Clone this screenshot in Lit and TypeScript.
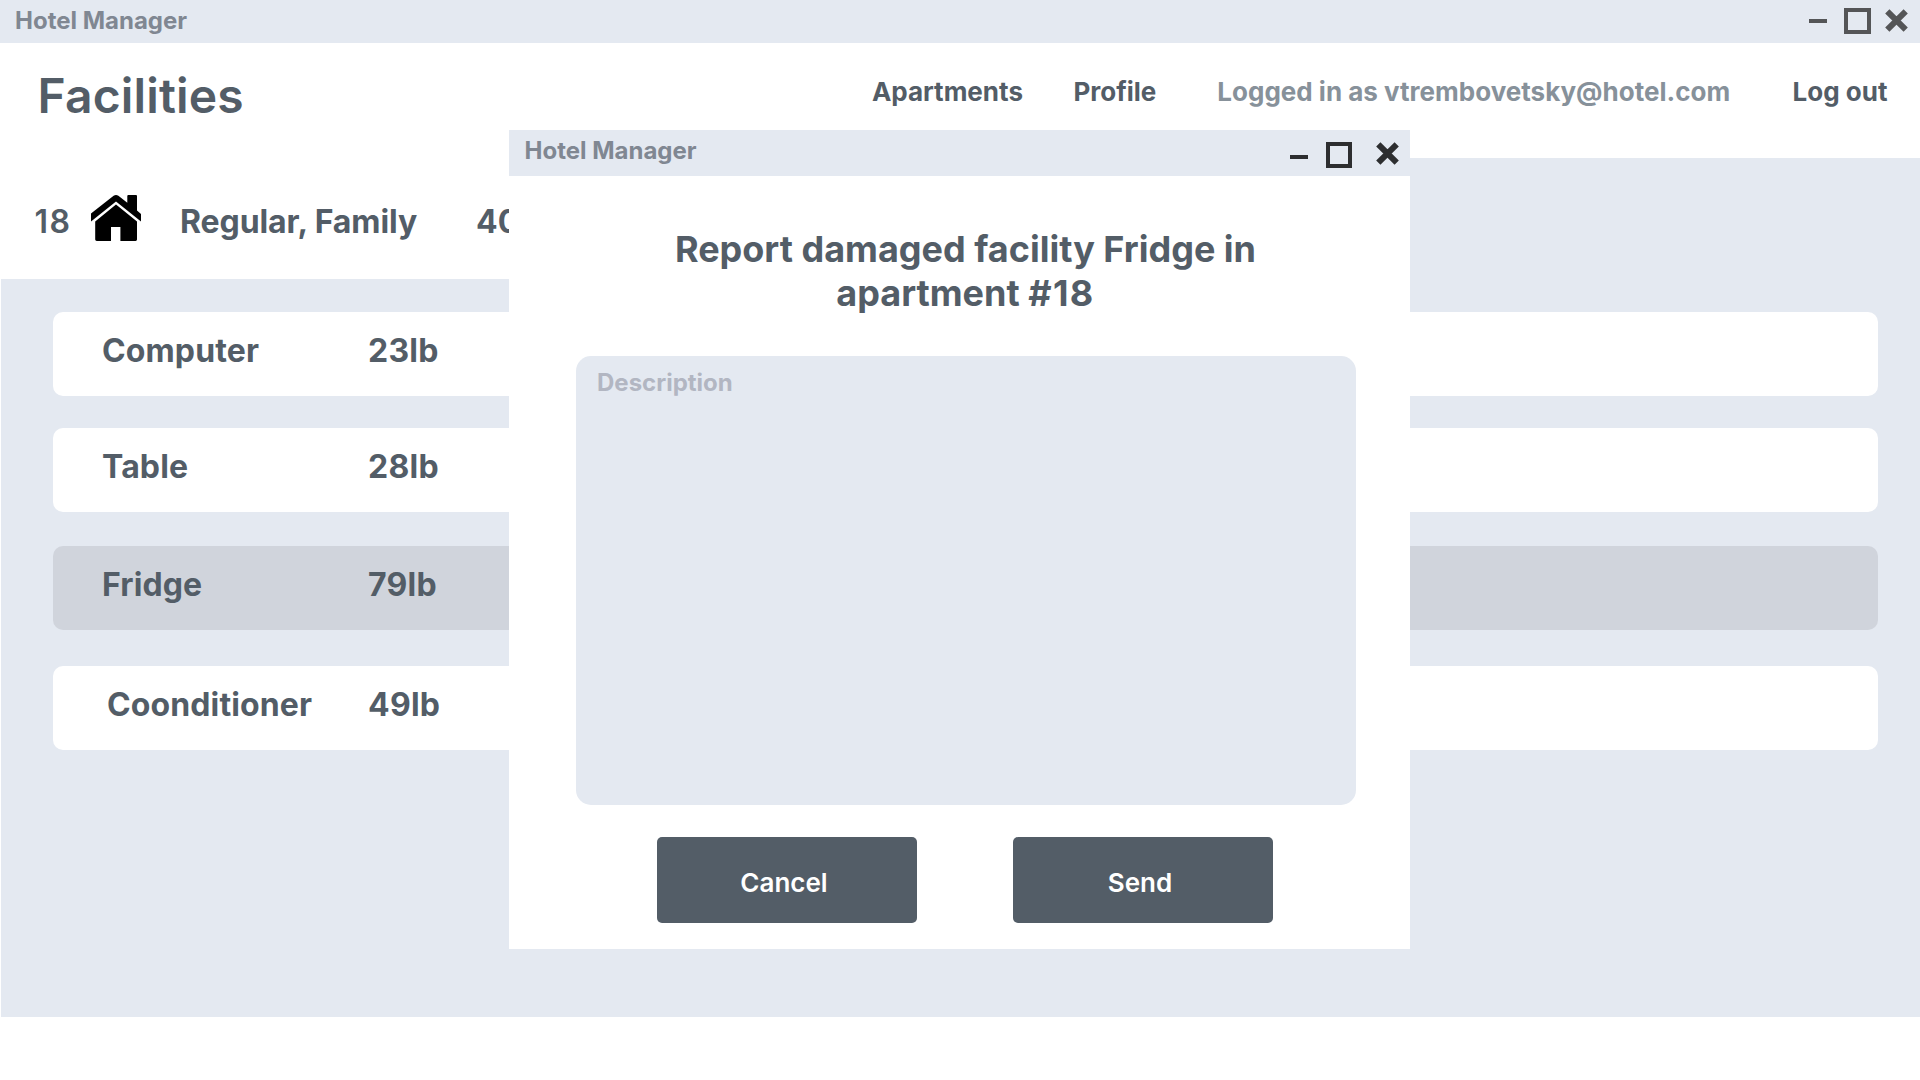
import { LitElement, html, svg, css } from "lit";
import { customElement, property } from "lit/decorators.js";
import { classMap } from "lit/directives/class-map.js";

interface Facility {
  name: string;
  price: string;
  selected?: boolean;
  indent?: boolean;
}

const facilities: Facility[] = [
  { name: "Computer", price: "23lb" },
  { name: "Table", price: "28lb" },
  { name: "Fridge", price: "79lb", selected: true },
  { name: "Coonditioner", price: "49lb", indent: true },
];

const crossPath = svg`<path d="M2.3 2.3L20.7 20.7M20.7 2.3L2.3 20.7" stroke="currentColor" stroke-width="6" fill="none" />`;

@customElement("window-bar")
export class WindowBar extends LitElement {
  @property({ type: Boolean, reflect: true }) dialog = false;

  static styles = css`
    :host {
      display: flex;
      box-sizing: border-box;
      height: 43px;
      padding: 6px 12.5px 0 15px;
      justify-content: space-between;
      background: #e4e9f1;
      color: #545557;
    }
    :host([dialog]) {
      height: 46px;
      padding: 6px 11px 0 15.5px;
      color: #2d2e30;
    }
    .label {
      font-size: 24px;
      line-height: 29px;
      font-weight: 700;
      color: #808792;
    }
    .controls {
      display: flex;
      align-items: flex-start;
    }
    .min {
      width: 18px;
      height: 4px;
      margin: 13px 17px 0 0;
      background: currentColor;
    }
    .max {
      box-sizing: border-box;
      width: 27px;
      height: 26px;
      margin: 2px 14px 0 0;
      border: 4px solid currentColor;
    }
    .close {
      display: block;
      width: 23px;
      height: 23px;
      margin-top: 3px;
    }
    :host([dialog]) .min {
      margin: 19px 18px 0 0;
    }
    :host([dialog]) .max {
      width: 26px;
      margin: 6px 24px 0 0;
    }
    :host([dialog]) .close {
      margin-top: 6px;
    }
  `;

  render() {
    return html`
      <span class="label">Hotel Manager</span>
      <div class="controls">
        <div class="min"></div>
        <div class="max"></div>
        <svg class="close" viewBox="0 0 23 23">${crossPath}</svg>
      </div>
    `;
  }
}

@customElement("report-dialog")
export class ReportDialog extends LitElement {
  static styles = css`
    :host {
      display: flex;
      flex-direction: column;
      background: #fff;
      color: #535d67;
    }
    .title {
      margin: 51px 0 0 12px;
      text-align: center;
      font-size: 36px;
      line-height: 44px;
      font-weight: 700;
    }
    .number {
      letter-spacing: 1.4px;
    }
    .field {
      box-sizing: border-box;
      height: 449px;
      margin: 41px 54px 0 67px;
      padding: 12px 21px;
      border-radius: 15px;
      background: #e4e9f1;
      color: #b2b6c2;
      font-size: 24px;
      line-height: 29px;
      font-weight: 700;
    }
    .actions {
      display: flex;
      gap: 96px;
      margin: 32px 0 0 148px;
    }
    .button {
      box-sizing: border-box;
      width: 260px;
      height: 86px;
      padding-top: 30px;
      padding-right: 6px;
      border-radius: 5px;
      background: #535d67;
      color: #fff;
      text-align: center;
      font-size: 26px;
      line-height: 31px;
      font-weight: 600;
    }
  `;

  render() {
    return html`
      <window-bar dialog></window-bar>
      <div class="title">
        Report damaged facility Fridge in<br />apartment <span class="number">#18</span>
      </div>
      <div class="field">Description</div>
      <div class="actions">
        <div class="button">Cancel</div>
        <div class="button">Send</div>
      </div>
    `;
  }
}

@customElement("app-root")
export class AppRoot extends LitElement {
  static styles = css`
    :host {
      display: block;
      position: relative;
      width: 1920px;
      height: 1080px;
      overflow: hidden;
      background: #fff;
      color: #535d67;
      font-family: Inter, sans-serif;
    }
    .header {
      display: flex;
      box-sizing: border-box;
      height: 115px;
      padding: 0 32.5px 0 37.5px;
      justify-content: space-between;
      align-items: flex-start;
    }
    .heading {
      margin-top: 24px;
      font-size: 48px;
      line-height: 58px;
      font-weight: 600;
      letter-spacing: 0.15px;
    }
    .nav {
      display: flex;
      margin-top: 33px;
      font-size: 26px;
      line-height: 31px;
      font-weight: 700;
      white-space: nowrap;
    }
    .profile {
      margin-left: 50.5px;
    }
    .user {
      margin-left: 61px;
      color: #87919a;
    }
    .logout {
      margin-left: 62.5px;
    }
    .panel {
      height: 859px;
      margin-left: 1px;
      background: #e4e9f1;
    }
    .apartment {
      display: flex;
      box-sizing: border-box;
      width: 1300px;
      height: 121px;
      margin-left: -1px;
      padding: 44px 0 0 34.5px;
      background: #fff;
      font-size: 32px;
      line-height: 39px;
      font-weight: 700;
      white-space: nowrap;
    }
    .number {
      width: 56.5px;
      font-weight: 600;
      letter-spacing: 1.5px;
    }
    .house {
      width: 50px;
      height: 46px;
      margin-top: -7px;
    }
    .kind {
      width: 296px;
      margin-left: 39px;
      letter-spacing: -0.08px;
    }
    .list {
      padding: 33px 42px 0 52px;
    }
    .card {
      display: flex;
      box-sizing: border-box;
      height: 84px;
      margin-bottom: 32px;
      padding: 19px 0 0 49px;
      border-radius: 10px;
      background: #fff;
      font-size: 32px;
      line-height: 39px;
      font-weight: 700;
      letter-spacing: 0.12px;
    }
    .card.selected {
      margin: 34px 0 36px;
      background: #d0d4dc;
    }
    .name {
      box-sizing: border-box;
      width: 266px;
    }
    .name.indent {
      padding-left: 5px;
    }
    .price {
      letter-spacing: 0.25px;
    }
    .dialog {
      position: absolute;
      left: 509px;
      top: 130px;
      width: 901px;
      height: 819px;
    }
  `;

  render() {
    return html`
      <window-bar></window-bar>
      <div class="header">
        <div class="heading">Facilities</div>
        <div class="nav">
          <span>Apartments</span>
          <span class="profile">Profile</span>
          <span class="user">Logged in as vtrembovetsky@hotel.com</span>
          <span class="logout">Log out</span>
        </div>
      </div>
      <div class="panel">
        <div class="apartment">
          <span class="number">18</span>
          <svg class="house" viewBox="0 0 50 46">
            <path
              d="M0 18.6L22.6 .8Q25 -.8 27.4 .8L36.3 7.8V1Q36.3 0 37.3 0H45Q46 0 46 1V15.6L50 19V26.6L25 6.4L0 26.6Z"
            />
            <path
              d="M25 9.6L46 26.4V44.6Q46 46 44.6 46H29.4V32H20V46H5.8Q4.2 46 4.2 44.6V26.4Z"
            />
          </svg>
          <span class="kind">Regular, Family</span>
          <span>40lb</span>
        </div>
        <div class="list">
          ${facilities.map(
            (f) => html`
              <div class=${classMap({ card: true, selected: !!f.selected })}>
                <span class=${classMap({ name: true, indent: !!f.indent })}>${f.name}</span>
                <span class="price">${f.price}</span>
              </div>
            `,
          )}
        </div>
      </div>
      <report-dialog class="dialog"></report-dialog>
    `;
  }
}
